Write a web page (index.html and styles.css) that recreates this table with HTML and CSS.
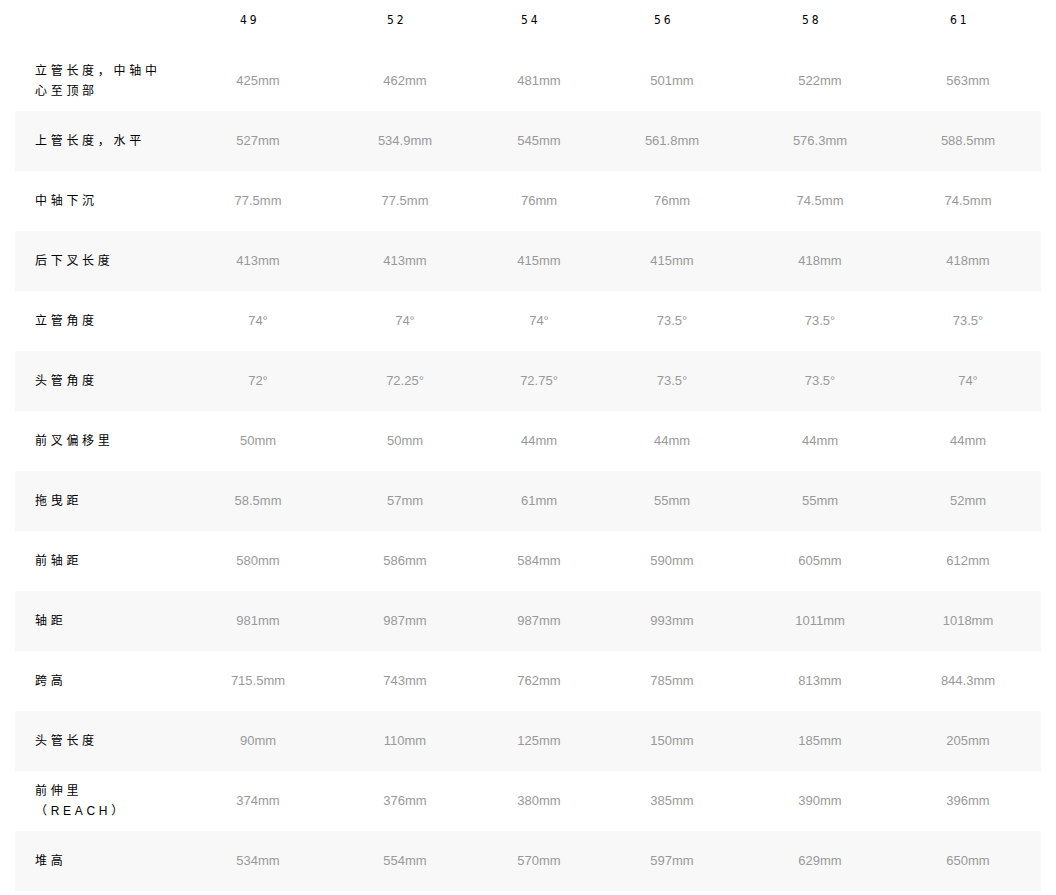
FILE: index.html
```html
<!DOCTYPE html>
<html lang="zh">
<head>
<meta charset="utf-8">
<title>几何尺寸</title>
<link rel="stylesheet" href="styles.css">
</head>
<body>
<div class="geo">
  <div class="row head">
    <div class="label"></div>
    <div class="cell"><span class="size">49</span></div>
    <div class="cell"><span class="size">52</span></div>
    <div class="cell"><span class="size">54</span></div>
    <div class="cell"><span class="size">56</span></div>
    <div class="cell"><span class="size">58</span></div>
    <div class="cell"><span class="size">61</span></div>
  </div>
  <div class="row">
    <div class="label">立管长度，中轴中心至顶部</div>
    <div class="cell">425mm</div><div class="cell">462mm</div><div class="cell">481mm</div><div class="cell">501mm</div><div class="cell">522mm</div><div class="cell">563mm</div>
  </div>
  <div class="row alt">
    <div class="label">上管长度，水平</div>
    <div class="cell">527mm</div><div class="cell">534.9mm</div><div class="cell">545mm</div><div class="cell">561.8mm</div><div class="cell">576.3mm</div><div class="cell">588.5mm</div>
  </div>
  <div class="row">
    <div class="label">中轴下沉</div>
    <div class="cell">77.5mm</div><div class="cell">77.5mm</div><div class="cell">76mm</div><div class="cell">76mm</div><div class="cell">74.5mm</div><div class="cell">74.5mm</div>
  </div>
  <div class="row alt">
    <div class="label">后下叉长度</div>
    <div class="cell">413mm</div><div class="cell">413mm</div><div class="cell">415mm</div><div class="cell">415mm</div><div class="cell">418mm</div><div class="cell">418mm</div>
  </div>
  <div class="row">
    <div class="label">立管角度</div>
    <div class="cell">74°</div><div class="cell">74°</div><div class="cell">74°</div><div class="cell">73.5°</div><div class="cell">73.5°</div><div class="cell">73.5°</div>
  </div>
  <div class="row alt">
    <div class="label">头管角度</div>
    <div class="cell">72°</div><div class="cell">72.25°</div><div class="cell">72.75°</div><div class="cell">73.5°</div><div class="cell">73.5°</div><div class="cell">74°</div>
  </div>
  <div class="row">
    <div class="label">前叉偏移里</div>
    <div class="cell">50mm</div><div class="cell">50mm</div><div class="cell">44mm</div><div class="cell">44mm</div><div class="cell">44mm</div><div class="cell">44mm</div>
  </div>
  <div class="row alt">
    <div class="label">拖曳距</div>
    <div class="cell">58.5mm</div><div class="cell">57mm</div><div class="cell">61mm</div><div class="cell">55mm</div><div class="cell">55mm</div><div class="cell">52mm</div>
  </div>
  <div class="row">
    <div class="label">前轴距</div>
    <div class="cell">580mm</div><div class="cell">586mm</div><div class="cell">584mm</div><div class="cell">590mm</div><div class="cell">605mm</div><div class="cell">612mm</div>
  </div>
  <div class="row alt">
    <div class="label">轴距</div>
    <div class="cell">981mm</div><div class="cell">987mm</div><div class="cell">987mm</div><div class="cell">993mm</div><div class="cell">1011mm</div><div class="cell">1018mm</div>
  </div>
  <div class="row">
    <div class="label">跨高</div>
    <div class="cell">715.5mm</div><div class="cell">743mm</div><div class="cell">762mm</div><div class="cell">785mm</div><div class="cell">813mm</div><div class="cell">844.3mm</div>
  </div>
  <div class="row alt">
    <div class="label">头管长度</div>
    <div class="cell">90mm</div><div class="cell">110mm</div><div class="cell">125mm</div><div class="cell">150mm</div><div class="cell">185mm</div><div class="cell">205mm</div>
  </div>
  <div class="row">
    <div class="label">前伸里（REACH）</div>
    <div class="cell">374mm</div><div class="cell">376mm</div><div class="cell">380mm</div><div class="cell">385mm</div><div class="cell">390mm</div><div class="cell">396mm</div>
  </div>
  <div class="row alt">
    <div class="label">堆高</div>
    <div class="cell">534mm</div><div class="cell">554mm</div><div class="cell">570mm</div><div class="cell">597mm</div><div class="cell">629mm</div><div class="cell">650mm</div>
  </div>
</div>
</body>
</html>
```

FILE: styles.css
```css
html, body {
  margin: 0;
  padding: 0;
  background: #ffffff;
}

.geo {
  padding: 0 15px;
  font-family: "Liberation Sans", Arial, "Noto Sans CJK SC", sans-serif;
}

.row {
  display: grid;
  grid-template-columns: 170px 146px 148px 120px 146px 150px 146px;
  height: 60px;
  align-items: center;
}

.row.alt {
  background: #f8f8f8;
}

.row.head {
  height: 51px;
  align-items: start;
}

.label {
  padding: 0 20px;
  font-family: "Liberation Sans", "Noto Sans CJK SC", sans-serif;
  font-size: 12px;
  line-height: 20px;
  letter-spacing: 3.7px;
  color: #000000;
}

.cell {
  text-align: center;
  font-size: 13px;
  line-height: 16px;
  color: #999999;
}

.head .cell {
  padding-top: 12px;
}

.size {
  display: inline-block;
  width: 36px;
  text-align: left;
  font-family: "DejaVu Sans Condensed", "Liberation Sans Narrow", sans-serif;
  font-size: 12px;
  line-height: 14px;
  letter-spacing: 3px;
  color: #000000;
}
```
